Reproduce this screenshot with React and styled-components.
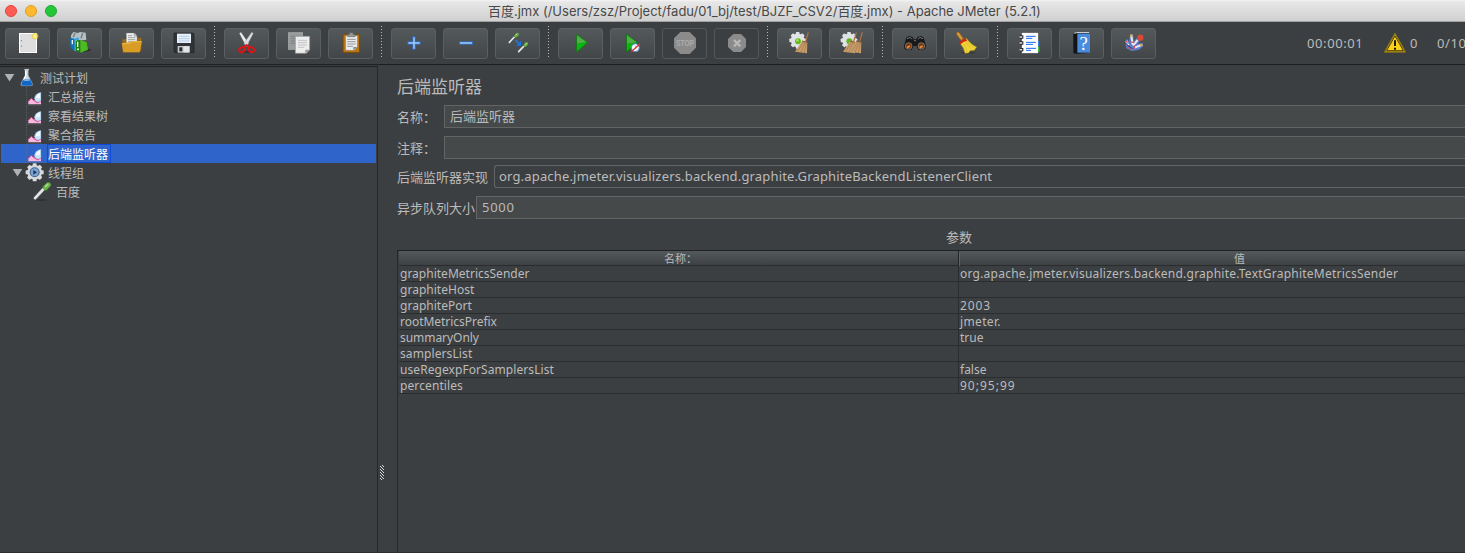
import React from "react";
import styled, { createGlobalStyle } from "styled-components";

const Global = createGlobalStyle`
  * { box-sizing: border-box; }
  html, body { margin: 0; background: #3c3f41; overflow: hidden; }
  body { font-family: "Noto Sans", "Noto Sans CJK SC", sans-serif; color: #bbbbbb; }
  svg { display: block; }
`;

const Window = styled.div`
  width: 1465px;
  height: 553px;
  display: flex;
  flex-direction: column;
  overflow: hidden;
  background: #3c3f41;
  border-bottom: 1px solid #2b2d2f;
`;

const TitleBar = styled.header`
  flex: none;
  height: 22px;
  display: grid;
  grid-template-columns: 488px 1fr;
  align-items: center;
  background: linear-gradient(#f4f4f4 0, #e7e7e7 2px, #d0d0d0 100%);
  border-bottom: 1px solid #a2a2a2;
`;

const Lights = styled.div`
  display: flex;
  gap: 8px;
  padding-left: 5px;
`;

const Light = styled.span`
  width: 12px;
  height: 12px;
  border-radius: 50%;
  background: ${(p) => p.$color};
  border: 1px solid ${(p) => p.$edge};
`;

const Title = styled.div`
  font: 13px/20px Inter, "Noto Sans CJK SC", sans-serif;
  letter-spacing: -0.01px;
  padding-top: 1px;
  color: #484848;
  white-space: nowrap;
`;

const Toolbar = styled.div`
  flex: none;
  height: 43px;
  display: flex;
  align-items: flex-start;
  padding: 6px 0 0 5px;
  border-bottom: 1px solid #1d1f20;
  overflow: hidden;
`;

const Group = styled.div`
  flex: none;
  display: flex;
  gap: 7px;
`;

const ToolButton = styled.button`
  width: 45px;
  height: 31px;
  padding: 0;
  border: 1px solid ${(p) => (p.disabled ? "#55585a" : "#5b5f61")};
  border-radius: 3px;
  background: ${(p) => (p.disabled ? "transparent" : "linear-gradient(#54595b, #424648)")};
  svg { margin: -1px; }
`;

const Separator = styled.span`
  flex: none;
  width: 1px;
  height: 31px;
  margin: -2px 9px 0 8px;
  background: repeating-linear-gradient(#b4b6b7 0 1px, transparent 1px 3px);
`;

const Status = styled.div`
  flex: none;
  display: flex;
  align-items: center;
  height: 29px;
  margin-left: 151px;
  font-size: 13px;
  white-space: nowrap;
`;

const Elapsed = styled.span`
  width: 76px;
  letter-spacing: 0.6px;
`;

const WarnCount = styled.span`
  display: flex;
  align-items: center;
  gap: 3px;
  width: 54px;
  svg { margin-top: 1px; }
`;

const Threads = styled.span`letter-spacing: 0.6px;`;

const Body = styled.main`
  flex: 1;
  min-height: 0;
  display: flex;
  padding-top: 1px;
`;

const Tree = styled.nav`
  flex: none;
  width: 378px;
  padding: 1px 1px 0;
  border-top: 1px solid #1f2122;
  border-right: 1px solid #25282a;
`;

const TreeRow = styled.div`
  height: 19px;
  display: flex;
  align-items: center;
  padding-left: ${(p) => p.$indent - 1}px;
  background: ${(p) => (p.$selected ? "#2f65ca" : "transparent")};
`;

const Toggle = styled.span`
  flex: none;
  width: 12px;
`;

const TreeLabel = styled.span`
  height: 19px;
  padding: 0 2px 0 0;
  margin-left: -1px;
  border: 1px solid ${(p) => (p.$selected ? "#0f4ad8" : "transparent")};
  font-size: 12px;
  line-height: 19px;
  color: ${(p) => (p.$selected ? "#ffffff" : "#bbbbbb")};
`;

const Splitter = styled.div`
  flex: none;
  width: 19px;
  padding: 399px 0 0 2px;
`;

const Panel = styled.section`
  flex: 1;
  min-width: 0;
  display: flex;
  flex-direction: column;
`;

const Heading = styled.h1`
  margin: 0;
  height: 39px;
  font-size: 17px;
  font-weight: 400;
  line-height: 42px;
`;

const Field = styled.label`
  height: ${(p) => p.$height}px;
  display: grid;
  grid-template-columns: ${(p) => p.$label}px 1fr;
  font-size: 13px;
  line-height: 24px;
  white-space: nowrap;
`;

const Value = styled.span`
  height: 23px;
  padding-left: ${(p) => p.$pad}px;
  border: 1px solid #646464;
  border-right: 0;
  border-radius: ${(p) => (p.$combo ? "3px 0 0 3px" : 0)};
  background: ${(p) => (p.$combo ? "transparent" : "#45494a")};
  line-height: 21px;
  letter-spacing: ${(p) => p.$spacing || 0}px;
`;

const Caption = styled.div`
  height: 25px;
  padding-left: 549px;
  font-size: 13px;
  line-height: 24px;
`;

const Table = styled.div`
  flex: 1;
  border-top: 1px solid #1f2122;
  border-left: 1px solid #26292a;
  padding-left: 1px;
`;

const TableRow = styled.div`
  display: grid;
  grid-template-columns: 560px 1fr;
  height: 16px;
  border-bottom: 1px solid #2a2c2d;
  font-size: 12px;
  line-height: 15px;
  white-space: nowrap;
`;

const Cell = styled.span`
  height: 15px;
  padding-left: 1px;
  letter-spacing: ${(p) => p.$spacing}px;
  &:first-child { border-right: 1px solid #2a2c2d; }
`;

const TableHead = styled(TableRow)`
  height: 15px;
  font-size: 11px;
  background: linear-gradient(#54595b, #3d4143);
`;

const HeadCell = styled.span`
  padding-left: ${(p) => p.$offset}px;
  &:first-child { border-right: 1px solid #222425; }
  & + & { border-left: 1px solid #606465; margin-top: 1px; line-height: 13px; }
`;

const Pic = ({ children }) => (
  <svg width="45" height="31" viewBox="0 0 135 93">{children}</svg>
);

const Gear = ({ x, y, r, fill = "#dfe3e6" }) => (
  <g transform={`translate(${x} ${y})`}>
    {[0, 45, 90, 135].map((a) => (
      <rect key={a} x={-r * 0.22} y={-r} width={r * 0.44} height={r * 2} rx="2" fill={fill} transform={`rotate(${a})`} />
    ))}
    <circle r={r * 0.82} fill={fill} />
  </g>
);

const Whisk = ({ x }) => (
  <g transform={`translate(${x} 0)`}>
    <path d="M94 13L86 40" stroke="#a87443" strokeWidth="4" />
    <path d="M76 38L91 43L90 76L54 71Z" fill="#c79e6b" />
    <path d="M80 42L62 70M84 43L72 72M88 45L82 74" stroke="#91683e" strokeWidth="1.6" />
    <path d="M75 39L91 43" stroke="#85582d" strokeWidth="3" />
  </g>
);

const Dropper = ({ x, y, s = 1 }) => (
  <g transform={`translate(${x} ${y}) scale(${s})`} strokeLinecap="round">
    <path d="M2 28L17 12" stroke="#4a4e50" strokeWidth="8" />
    <path d="M2 28L17 12" stroke="#e2e6e8" strokeWidth="5" />
    <path d="M16 7L23 14" stroke="#345f28" strokeWidth="4" />
    <path d="M21 9L26 4" stroke="#6cae4c" strokeWidth="9" />
    <path d="M21 7L25 3" stroke="#a9dc87" strokeWidth="3" />
  </g>
);

const Play = ({ x = 0 }) => (
  <g transform={`translate(${x} 0)`}>
    <path d="M55 18L90 44L55 73Z" fill="#0a9c12" stroke="#157012" strokeWidth="2" />
    <path d="M57 22L86 43L57 47Z" fill="#4fae45" />
    <path d="M57 48L84 45L57 69Z" fill="#08b811" />
  </g>
);

const icons = {
  new: (
    <Pic>
      <rect x="43.5" y="16.5" width="51" height="57" fill="#dedede" stroke="#fff" strokeWidth="3" />
      <circle cx="49" cy="38" r="2" fill="#888" /><circle cx="49" cy="54" r="2" fill="#888" />
      <circle cx="90" cy="25" r="10" fill="#d9c84e" opacity=".65" />
      <circle cx="90" cy="25" r="6" fill="#fff6a4" stroke="#ffe64e" strokeWidth="3" />
    </Pic>
  ),
  templates: (
    <Pic>
      <ellipse cx="82" cy="66" rx="20" ry="5" fill="#303334" />
      <path d="M42 22L49 12L62 15L69 12L86 14L88 36L65 37L42 32Z" fill="#b6bfc3" />
      <path d="M49 28L54 16M72 31L77 16" stroke="#707b80" strokeWidth="4" />
      <path d="M39 29L52 32V68L41 60Z" fill="#0a72b5" />
      <path d="M52 32L65 28V69L52 70Z" fill="#31a5e2" />
      <path d="M46 36V49M58 37V49" stroke="#e6f6ff" strokeWidth="4" />
      <path d="M56 38L70 35V74L57 68Z" fill="#17830e" />
      <path d="M70 35L89 43L93 65L70 74Z" fill="#49bd20" />
      <path d="M62 41V57" stroke="#fff" strokeWidth="4" /><circle cx="63" cy="64" r="3" fill="#d9ffd2" />
    </Pic>
  ),
  open: (
    <Pic>
      <path d="M40 34H57L61 29H97V65L92 73H41Z" fill="#a16b10" />
      <path d="M52 15H76L84 23V55H52Z" fill="#eceded" stroke="#777" strokeWidth="1" />
      <path d="M76 15V24H84M57 23H70M57 29H79M57 35H79M57 41H79" stroke="#777c7e" strokeWidth="2" fill="none" />
      <path d="M38 46L62 43L68 39H99L92 73H43Z" fill="#d99d26" />
      <path d="M40 48L63 45L69 41H96" stroke="#f1c762" strokeWidth="2" fill="none" />
    </Pic>
  ),
  save: (
    <Pic>
      <path d="M39 15H96L99 18V74H42L39 71Z" fill="#30343a" stroke="#1c1e20" strokeWidth="2" />
      <rect x="48" y="17" width="42" height="28" fill="#e6f1fb" />
      <path d="M53 25H85M53 32H85M53 39H85" stroke="#9abada" strokeWidth="2" />
      <rect x="50" y="54" width="36" height="20" fill="#c5c8ca" />
      <rect x="55" y="58" width="9" height="12" fill="#25292d" />
      <path d="M68 55V73H85V55Z" fill="#e4e5e6" />
    </Pic>
  ),
  cut: (
    <Pic>
      <ellipse cx="69" cy="72" rx="23" ry="3" fill="#343738" />
      <path d="M46 16L51 13L74 46L67 56Z" fill="#eceeee" stroke="#888" />
      <path d="M88 16L83 13L60 46L67 56Z" fill="#dcdfe0" stroke="#888" />
      <g fill="none" stroke="#dd1515" strokeWidth="6">
        <ellipse cx="54" cy="65" rx="9" ry="7" transform="rotate(-25 54 65)" />
        <ellipse cx="82" cy="65" rx="9" ry="7" transform="rotate(25 82 65)" />
        <path d="M60 58L67 51L75 58" />
      </g>
    </Pic>
  ),
  copy: (
    <Pic>
      <rect x="37" y="14" width="43" height="50" fill="#999c9d" stroke="#aaadad" strokeWidth="2" />
      <path d="M44 25H73M44 32H58M44 39H58M44 46H58" stroke="#707374" strokeWidth="2" />
      <path d="M58 25H101V65L91 76H58Z" fill="#eeeeee" stroke="#8e9192" strokeWidth="2" />
      <path d="M66 37H93M66 44H93M66 51H93M66 58H85" stroke="#aaadae" strokeWidth="2" />
      <path d="M88 76V65H101Z" fill="#999" />
    </Pic>
  ),
  paste: (
    <Pic>
      <rect x="45" y="19" width="50" height="55" rx="2" fill="#b87518" stroke="#754708" strokeWidth="3" />
      <path d="M53 23H88V57L79 67H53Z" fill="#eceded" stroke="#777" />
      <path d="M58 34H83M58 41H83M58 48H83M58 55H75" stroke="#919698" strokeWidth="3" />
      <path d="M76 67V57H88Z" fill="#888" />
      <path d="M59 26V19H65V14H75V19H81V26Z" fill="#949b98" stroke="#5f6663" strokeWidth="2" />
    </Pic>
  ),
  plus: (
    <Pic><path d="M69 25V65M49 45H89" stroke="#2f6fc8" strokeWidth="10" /><path d="M69 28V62M52 45H86" stroke="#a4cbf5" strokeWidth="4.5" /></Pic>
  ),
  minus: (
    <Pic><path d="M48 45H90" stroke="#2f6fc8" strokeWidth="10" /><path d="M51 45H87" stroke="#a4cbf5" strokeWidth="4.5" /></Pic>
  ),
  toggle: (
    <Pic>
      <Dropper x="41" y="15" /><Dropper x="69" y="43" />
      <path d="M61 37L71 46" stroke="#1d7df2" strokeWidth="5" strokeDasharray="5 1" />
      <path d="M78 38L78 53L63 53Z" fill="#1674ef" />
    </Pic>
  ),
  start: <Pic><Play /></Pic>,
  startNoPause: (
    <Pic>
      <Play x={-6} />
      <circle cx="76" cy="59" r="12" fill="#fff" stroke="#4680bd" strokeWidth="3" />
      <path d="M76 52V59H82" stroke="#6ba8dd" strokeWidth="2" fill="none" />
      <path d="M64 71L90 47" stroke="#e33333" strokeWidth="4" />
    </Pic>
  ),
  stop: (
    <Pic>
      <path d="M55 12H83L102 31V59L83 78H55L36 59V31Z" fill="#8b8b8b" />
      <text x="69" y="54" textAnchor="middle" textLength="54" lengthAdjust="spacingAndGlyphs" fontFamily="Liberation Sans" fontWeight="700" fontSize="26" fill="#acacac">STOP</text>
    </Pic>
  ),
  shutdown: (
    <Pic>
      <path d="M58 18H81L96 33V57L81 72H58L42 57V33Z" fill="#8b8b8b" />
      <path d="M60 36L79 55M79 36L60 55" stroke="#b8b8b8" strokeWidth="7" />
    </Pic>
  ),
  clear: <Pic><Gear x={62} y={37} r={25} /><circle cx="63" cy="40" r="9" fill="#62b91c" /><circle cx="61" cy="37" r="4" fill="#aadf5e" /><Whisk x={0} /></Pic>,
  clearAll: <Pic><Gear x={60} y={37} r={25} /><circle cx="61" cy="40" r="9" fill="#62b91c" /><Whisk x={-12} /><Whisk x={6} /></Pic>,
  search: (
    <Pic>
      <path d="M43 29L50 24L61 26L65 34H73L77 26L88 24L95 29L102 53L99 63L90 67L79 65L73 54H65L59 65L48 67L38 63L36 53Z" fill="#18191b" />
      <path d="M45 32L55 28L60 34M93 32L83 28L78 34M66 38H72" stroke="#74787a" strokeWidth="3" fill="none" />
      <circle cx="50" cy="54" r="10" fill="#773914" stroke="#8b8e8f" strokeWidth="2" />
      <circle cx="88" cy="54" r="10" fill="#773914" stroke="#8b8e8f" strokeWidth="2" />
      <path d="M45 59L54 54M83 59L92 54" stroke="#e88837" strokeWidth="6" />
    </Pic>
  ),
  reset: (
    <Pic>
      <ellipse cx="73" cy="74" rx="21" ry="3" fill="#353737" />
      <path d="M42 17L55 35" stroke="#9b641d" strokeWidth="11" strokeLinecap="round" />
      <path d="M42 17L52 31" stroke="#d99a3e" strokeWidth="7" strokeLinecap="round" />
      <path d="M49 47L67 31Q82 51 98 57L91 67L78 68L74 75L63 76Q60 59 49 47Z" fill="#f0d335" stroke="#a58a14" strokeWidth="1.5" />
      <path d="M58 45Q67 57 69 72M64 41Q75 55 83 65M68 38Q80 53 92 61" stroke="#c4aa24" strokeWidth="1.5" fill="none" />
      <path d="M46 45Q53 33 66 32L69 38Q56 40 50 49Z" fill="#d32215" />
    </Pic>
  ),
  log: (
    <Pic>
      <path d="M91 39H98V54H91Z" fill="#1669df" /><path d="M91 56H98V71H91Z" fill="#21b624" />
      <path d="M45 15H93V75H45Z" fill="#fff" stroke="#e2e2e2" />
      <path d="M57 25H86M57 31H76M57 43H87M57 49H78M57 61H87M57 67H72" stroke="#1467f5" strokeWidth="3" />
      {[27, 45, 65].map((y) => <g key={y}><path d={`M39 ${y}H49`} stroke="#151515" strokeWidth="10" /><path d={`M38 ${y}H46`} stroke="#d7d7d7" strokeWidth="5" /></g>)}
    </Pic>
  ),
  help: (
    <Pic>
      <path d="M43 17L51 13H92V74L55 77L43 76Z" fill="#111518" />
      <path d="M46 16L52 14H91" stroke="#e7edf1" strokeWidth="3" fill="none" />
      <rect x="55" y="17" width="38" height="57" fill="#4a8bdd" />
      <text x="74" y="66" textAnchor="middle" fontFamily="Liberation Serif" fontSize="56" fill="#fff">?</text>
    </Pic>
  ),
  threads: (
    <Pic>
      <path d="M42 41L47 32L54 41L57 22L66 19L69 41L76 31L87 38L80 47L95 45L97 54L84 65L62 69L46 61Z" fill="#5d7dca" />
      <path d="M46 39L54 52M61 24L65 50M80 36L66 53M91 51L71 59" stroke="#e4eaf5" strokeWidth="6" />
      <path d="M43 45L53 55L66 63M49 41L57 50" stroke="#2b469f" strokeWidth="3" strokeDasharray="4 3" />
      <path d="M45 39L50 46M58 41L70 44M70 52V62M49 57L62 64" stroke="#dc3c4e" strokeWidth="3" />
      <circle cx="61" cy="23" r="4" fill="#edae4e" /><circle cx="91" cy="51" r="4" fill="#e6a04b" />
      <circle cx="88" cy="29" r="9.5" fill="#d94834" />
    </Pic>
  ),
};

const toolbar = [
  ["new", "templates", "open", "save"],
  ["cut", "copy", "paste"],
  ["plus", "minus", "toggle"],
  ["start", "startNoPause", "stop", "shutdown"],
  ["clear", "clearAll"],
  ["search", "reset"],
  ["log", "help", "threads"],
];

const TreeSvg = styled.svg`flex: none;`;
const TreePic = ({ children }) => (
  <TreeSvg width="24" height="19" viewBox="0 0 72 57">{children}</TreeSvg>
);

const treeIcons = {
  flask: (
    <TreePic>
      <path d="M25 3H39V7H37V22L49 46Q52 54 44 54H20Q12 54 15 46L27 22V7H25Z" fill="#cbd8de" stroke="#7d878b" strokeWidth="1" />
      <path d="M22 34H42L49 48Q50 53 44 53H20Q14 53 16 47Z" fill="#1266c4" />
      <path d="M29 8V24L23 36" stroke="#fff" strokeWidth="4" fill="none" />
      <ellipse cx="32" cy="36" rx="10" ry="3" fill="#73b3ea" />
    </TreePic>
  ),
  chart: (
    <TreePic>
      <path d="M8 0V55H54" stroke="#6c6f70" strokeWidth="2" strokeDasharray="3 3" fill="none" />
      <path d="M13 52V43L22 34L29 40L38 38L51 41V52Z" fill="#f9b8df" />
      <path d="M13 43L22 34L30 41L40 47L51 42" stroke="#d8407c" strokeWidth="3" fill="none" />
      <path d="M31 34Q34 19 51 16V42Q41 48 34 41Z" fill="#c9e4fa" stroke="#5b8fc4" strokeWidth="1" />
      <path d="M35 34Q38 22 48 19V32Z" fill="#f3fbff" />
    </TreePic>
  ),
  gear: (
    <TreePic>
      <Gear x={32} y={28} r={27} fill="#d8dbde" />
      <circle cx="32" cy="28" r="15" fill="#3f5f8c" />
      <circle cx="32" cy="28" r="12" fill="#7fa3d0" />
      <path d="M28 21L39 28L28 35Z" fill="#17365f" />
    </TreePic>
  ),
  dropper: (
    <TreePic>
      <ellipse cx="27" cy="54" rx="20" ry="2" fill="#2d3031" />
      <Dropper x={6} y={2} s={1.65} />
    </TreePic>
  ),
};

const tree = [
  { label: "测试计划", icon: "flask", indent: 4, open: true },
  { label: "汇总报告", icon: "chart", indent: 12 },
  { label: "察看结果树", icon: "chart", indent: 12 },
  { label: "聚合报告", icon: "chart", indent: 12 },
  { label: "后端监听器", icon: "chart", indent: 12, selected: true },
  { label: "线程组", icon: "gear", indent: 12, open: true },
  { label: "百度", icon: "dropper", indent: 20 },
];

// [name, value, name tracking, value tracking]
const params = [
  ["graphiteMetricsSender", "org.apache.jmeter.visualizers.backend.graphite.TextGraphiteMetricsSender", 0.01, 0.23],
  ["graphiteHost", "", 0.02, 0],
  ["graphitePort", "2003", 0.02, 0.9],
  ["rootMetricsPrefix", "jmeter.", -0.03, 0.35],
  ["summaryOnly", "true", -0.05, 0],
  ["samplersList", "", 0.1, 0],
  ["useRegexpForSamplersList", "false", 0.07, 0],
  ["percentiles", "90;95;99", 0.1, 1],
];

export default function App() {
  return (
    <Window>
      <Global />
      <TitleBar>
        <Lights>
          <Light $color="#ff5c54" $edge="#e2463f" />
          <Light $color="#ffb92e" $edge="#df9e25" />
          <Light $color="#25c63a" $edge="#1bab2c" />
        </Lights>
        <Title>百度.jmx (/Users/zsz/Project/fadu/01_bj/test/BJZF_CSV2/百度.jmx) - Apache JMeter (5.2.1)</Title>
      </TitleBar>
      <Toolbar>
        {toolbar.map((group, i) => (
          <React.Fragment key={i}>
            {i > 0 && <Separator />}
            <Group>
              {group.map((name) => (
                <ToolButton key={name} aria-label={name} disabled={name === "stop" || name === "shutdown"}>
                  {icons[name]}
                </ToolButton>
              ))}
            </Group>
          </React.Fragment>
        ))}
        <Status>
          <Elapsed>00:00:01</Elapsed>
          <WarnCount>
            <svg width="24" height="22" viewBox="0 0 72 66">
              <path d="M36 5L67 60H5Z" fill="#fbd116" stroke="#8d7715" strokeWidth="4" strokeLinejoin="round" />
              <path d="M36 12L61 56H11Z" fill="#fdd017" stroke="#2b2818" strokeWidth="2.5" strokeLinejoin="round" />
              <path d="M36 25V42M36 47V53" stroke="#1b1a12" strokeWidth="6" />
            </svg>
            0
          </WarnCount>
          <Threads>0/10</Threads>
        </Status>
      </Toolbar>
      <Body>
        <Tree>
          {tree.map((n) => (
            <TreeRow key={n.label} $indent={n.indent} $selected={n.selected}>
              <Toggle>
                {n.open && <svg width="12" height="9" viewBox="0 0 12 9"><path d="M.7 1H10.3L5.5 8.5Z" fill="#afb1b3" /></svg>}
              </Toggle>
              {treeIcons[n.icon]}
              <TreeLabel $selected={n.selected}>{n.label}</TreeLabel>
            </TreeRow>
          ))}
        </Tree>
        <Splitter>
          <svg width="4" height="15" viewBox="0 0 4 15" shapeRendering="crispEdges">
            {[0, 3, 6, 9, 12].map((y) => (
              <path key={y} d={`M0 ${y + 1}h1v1h-1zM1 ${y + 2}h1v1h-1zM2 ${y}h1v1h-1zM3 ${y + 1}h1v1h-1z`} fill="#d6d7d7" />
            ))}
          </svg>
        </Splitter>
        <Panel>
          <Heading>后端监听器</Heading>
          <Field $label={47} $height={31}>名称：<Value $pad={5}>后端监听器</Value></Field>
          <Field $label={47} $height={29}>注释：<Value $pad={5} /></Field>
          <Field $label={97} $height={31}>后端监听器实现<Value $combo $pad={4} $spacing={0.17}>org.apache.jmeter.visualizers.backend.graphite.GraphiteBackendListenerClient</Value></Field>
          <Field $label={79} $height={29}>异步队列大小<Value $pad={5} $spacing={0.7}>5000</Value></Field>
          <Caption>参数</Caption>
          <Table>
            <TableHead><HeadCell $offset={265}>名称：</HeadCell><HeadCell $offset={274}>值</HeadCell></TableHead>
            {params.map(([k, v, ks, vs]) => (
              <TableRow key={k}><Cell $spacing={ks}>{k}</Cell><Cell $spacing={vs}>{v}</Cell></TableRow>
            ))}
          </Table>
        </Panel>
      </Body>
    </Window>
  );
}
